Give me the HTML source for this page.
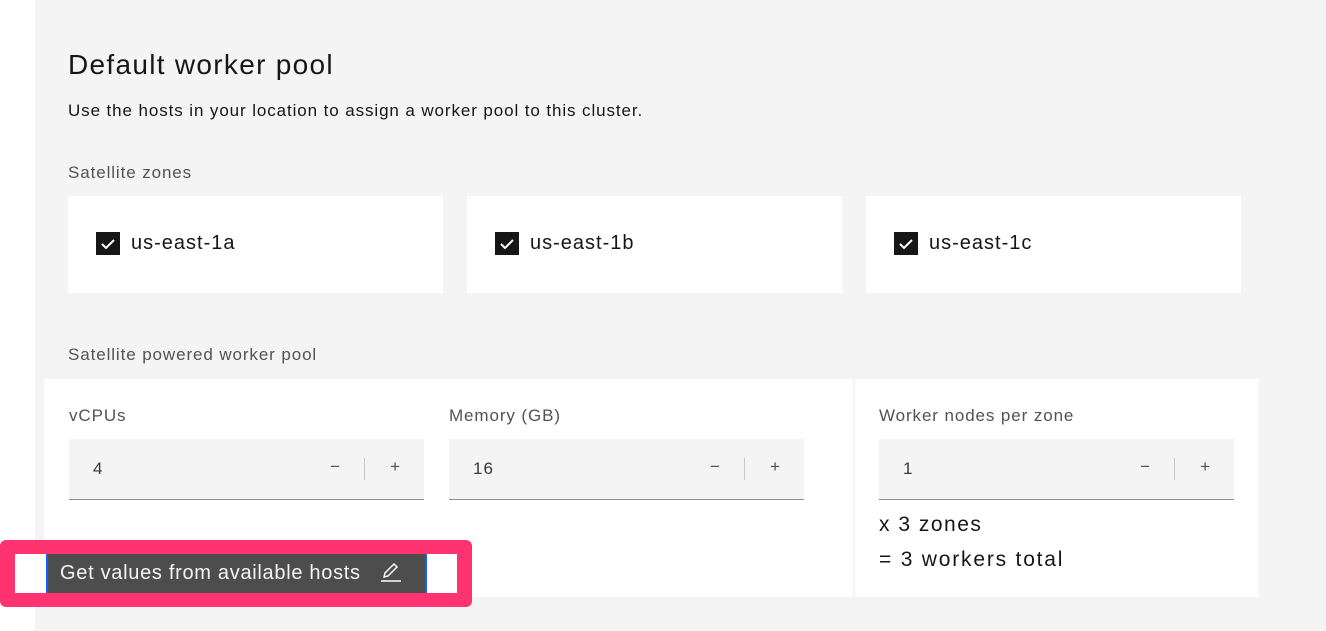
<!DOCTYPE html>
<html><head><style>
*{box-sizing:border-box;margin:0;padding:0}
body{width:1326px;height:631px;overflow:hidden;background:#fff;font-family:"Liberation Sans",sans-serif;color:#161616;position:relative}
.bg{position:absolute;left:35px;top:0;width:1291px;height:631px;background:#f4f4f4}
.a{position:absolute}
.card{position:absolute;top:196px;width:375px;height:97px;background:#fff}
.cb{position:absolute;left:28px;top:36px;width:24px;height:23px;background:#161616}
.card span{position:absolute;left:63px;top:36px;font-size:20px;letter-spacing:1px}
.lbl{position:absolute;font-size:16px;color:#525252;letter-spacing:0.9px}
.inp{position:absolute;top:439px;width:355px;height:61px;background:#f4f4f4;border-bottom:1px solid #8d8d8d}
.inp .v{position:absolute;left:24px;top:20px;font-size:17px;color:#393939;letter-spacing:1px}
.inp .m{position:absolute;right:84px;top:18px;font-size:17px;color:#525252}
.inp .p{position:absolute;right:24px;top:18px;font-size:17px;color:#525252}
.inp .s{position:absolute;right:59px;top:19px;width:1px;height:22px;background:#c6c6c6}
</style></head><body>
<div class="bg"></div>
<div class="a" style="left:68px;top:49px;font-size:28px;letter-spacing:1.3px">Default worker pool</div>
<div class="a" style="left:68px;top:101px;font-size:17px;letter-spacing:0.9px">Use the hosts in your location to assign a worker pool to this cluster.</div>
<div class="lbl" style="left:68px;top:163px;font-size:17px">Satellite zones</div>
<div class="card" style="left:68px"><div class="cb"><svg width="24" height="23"><path d="M6 12l4 4 8-8" stroke="#fff" stroke-width="2" fill="none"/></svg></div><span>us-east-1a</span></div>
<div class="card" style="left:467px"><div class="cb"><svg width="24" height="23"><path d="M6 12l4 4 8-8" stroke="#fff" stroke-width="2" fill="none"/></svg></div><span>us-east-1b</span></div>
<div class="card" style="left:866px"><div class="cb"><svg width="24" height="23"><path d="M6 12l4 4 8-8" stroke="#fff" stroke-width="2" fill="none"/></svg></div><span>us-east-1c</span></div>
<div class="lbl" style="left:68px;top:345px;font-size:17px">Satellite powered worker pool</div>
<div class="a" style="left:44px;top:379px;width:809px;height:218px;background:#fff"></div>
<div class="a" style="left:855px;top:379px;width:403px;height:218px;background:#fff"></div>
<div class="lbl" style="left:69px;top:406px;font-size:17px">vCPUs</div>
<div class="lbl" style="left:449px;top:406px;font-size:17px">Memory (GB)</div>
<div class="lbl" style="left:879px;top:406px;font-size:17px">Worker nodes per zone</div>
<div class="inp" style="left:69px"><div class="v">4</div><div class="m">−</div><div class="s"></div><div class="p">+</div></div>
<div class="inp" style="left:449px"><div class="v">16</div><div class="m">−</div><div class="s"></div><div class="p">+</div></div>
<div class="inp" style="left:879px"><div class="v">1</div><div class="m">−</div><div class="s"></div><div class="p">+</div></div>
<div class="a" style="left:879px;top:513px;font-size:21px;letter-spacing:1.5px">x 3 zones</div>
<div class="a" style="left:879px;top:548px;font-size:21px;letter-spacing:1.8px">= 3 workers total</div>
<div class="a" style="left:0;top:540px;width:472px;height:67px;background:#ff3370;border-radius:6px"></div>
<div class="a" style="left:15px;top:554px;width:442px;height:39px;background:#fff"></div>
<div class="a" style="left:46px;top:554px;width:381px;height:39px;background:#4d4d4d;border-left:2px solid #0f62fe;border-right:2px solid #0f62fe"></div>
<div class="a" style="left:60px;top:562px;font-size:20px;color:#f4f4f4;letter-spacing:0.7px">Get values from available hosts</div>
<svg class="a" style="left:380px;top:561px" width="22" height="22" viewBox="0 0 22 22"><path d="M4 16l1-4L14 3l3 3-9 9z" stroke="#fff" stroke-width="1.5" fill="none"/><path d="M1 20h20" stroke="#fff" stroke-width="1.5"/></svg>
</body></html>
